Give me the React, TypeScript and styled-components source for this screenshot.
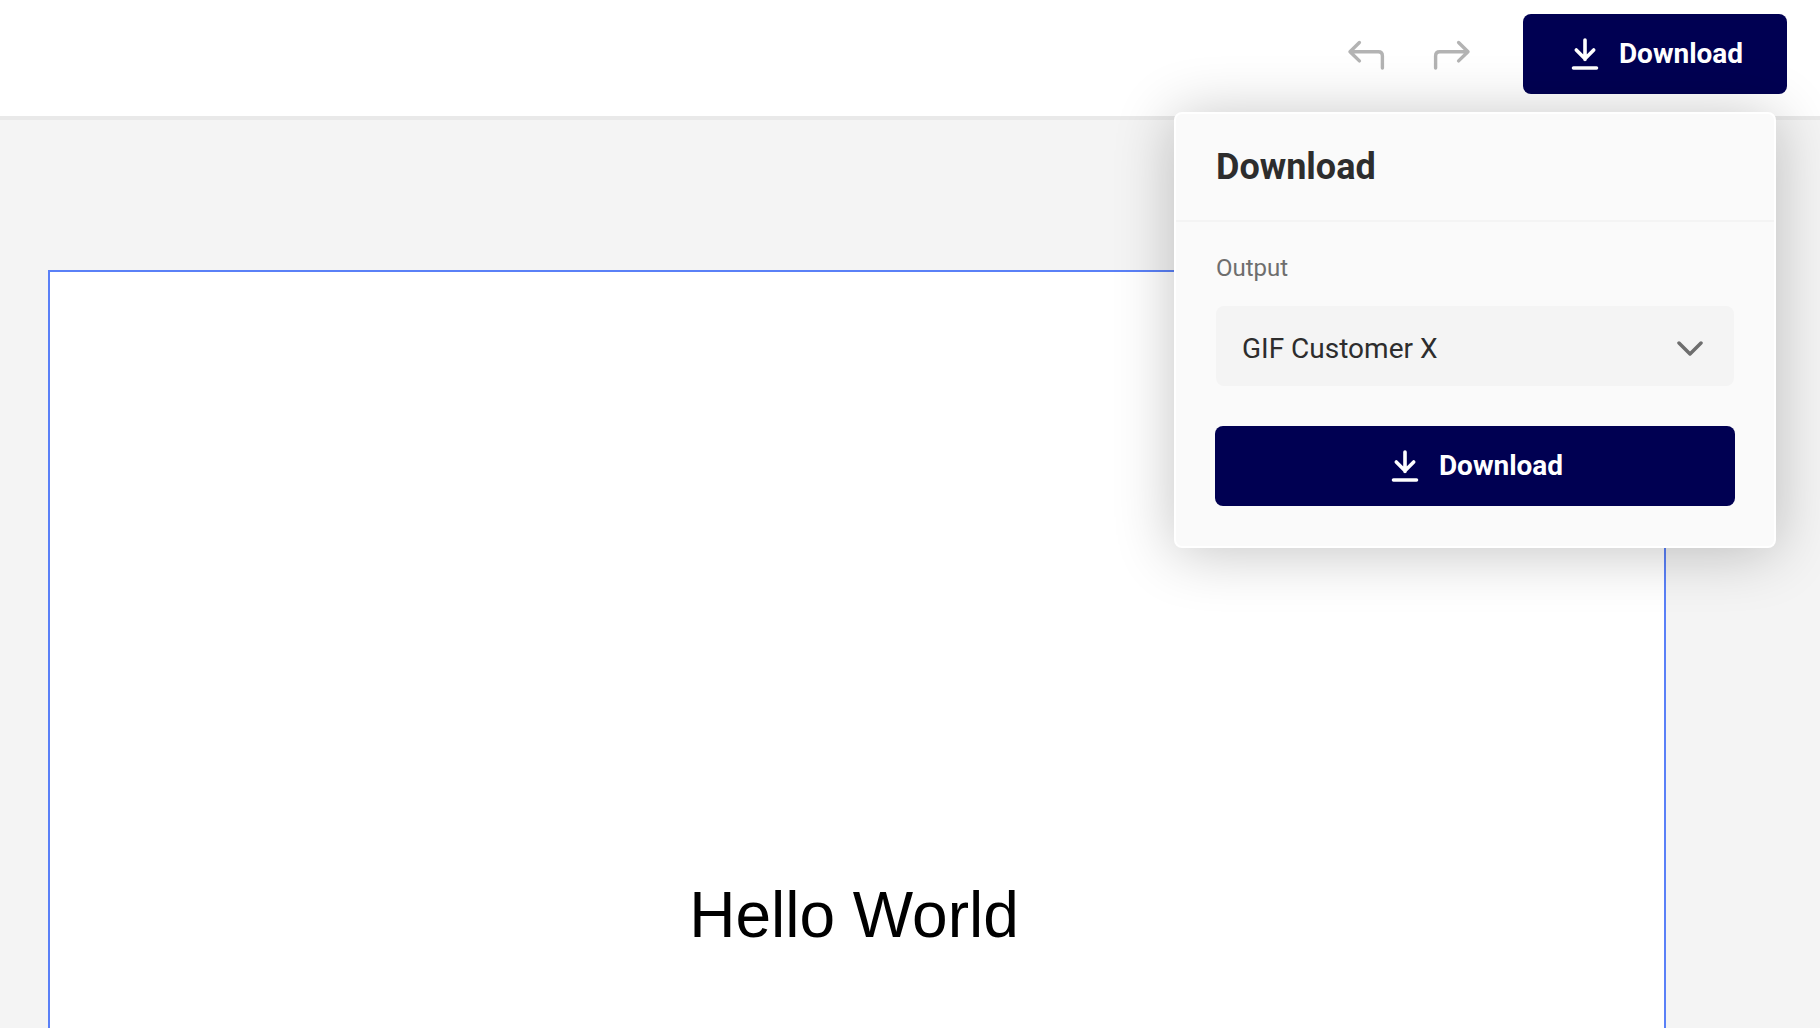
import React, { useState } from "react";
import styled, { createGlobalStyle } from "styled-components";

const GlobalStyle = createGlobalStyle`
  *, *::before, *::after { box-sizing: border-box; }
  body {
    margin: 0;
    background: #f4f4f4;
    font-family: Roboto, "Liberation Sans", sans-serif;
    color: #2d2d2d;
  }
`;

const Page = styled.div`
  display: flex;
  flex-direction: column;
  min-height: 100vh;
`;

const Toolbar = styled.header`
  position: relative;
  display: flex;
  align-items: center;
  justify-content: flex-end;
  padding: 14px 33px 22px;
  background: #ffffff;
  border-bottom: 4px solid #e9e9e9;
`;

const History = styled.div`
  display: flex;
  gap: 22px;
  margin-right: 39px;
`;

const IconButton = styled.button`
  display: flex;
  align-items: center;
  justify-content: center;
  width: 64px;
  height: 64px;
  padding: 0;
  border: 0;
  background: transparent;
  color: #b3b3b3;
`;

const PrimaryButton = styled.button<{ $block?: boolean }>`
  display: flex;
  align-items: center;
  justify-content: center;
  gap: 16px;
  width: ${({ $block }) => ($block ? "100%" : "264px")};
  height: 80px;
  padding: 0 40px;
  border: 0;
  border-radius: 8px;
  background: #000052;
  color: #ffffff;
  font: 700 28px/40px Roboto, "Liberation Sans", sans-serif;
  cursor: pointer;
`;

const Popover = styled.section`
  position: absolute;
  top: 112px;
  right: 44px;
  z-index: 1;
  width: 602px;
  border: 2px solid #ffffff;
  border-radius: 8px;
  background: #fafafa;
  box-shadow: 0 4px 60px rgba(0, 0, 0, 0.24);
`;

const PopoverHeader = styled.div`
  padding: 33px 40px;
  border-bottom: 2px solid #f4f4f4;
`;

const Title = styled.h2`
  margin: 0;
  font-size: 36px;
  font-weight: 700;
  line-height: 40px;
`;

const PopoverBody = styled.form`
  display: flex;
  flex-direction: column;
  padding: 26px 39px 40px;
`;

const Label = styled.label`
  margin: 0 1px 18px;
  color: #6e6e6e;
  font-size: 24px;
  line-height: 40px;
`;

const SelectField = styled.div`
  display: grid;
  align-items: center;
  margin: 0 1px 40px;

  > * { grid-area: 1 / 1; }
  > svg {
    justify-self: end;
    margin-right: 29px;
    pointer-events: none;
    color: #6e6e6e;
  }
`;

const Select = styled.select`
  width: 100%;
  height: 80px;
  padding: 6px 72px 0 26px;
  border: 0;
  border-radius: 8px;
  appearance: none;
  background: #f4f4f4;
  color: #2d2d2d;
  font: 400 28px/40px Roboto, "Liberation Sans", sans-serif;
`;

const Workspace = styled.main`
  display: flex;
  flex: 1;
  padding: 150px 154px 0 48px;
`;

const Canvas = styled.div`
  flex: 1;
  padding: 607px 6px 0 0;
  border: 2px solid #5a80f7;
  border-bottom: 0;
  background: #ffffff;
`;

const CanvasText = styled.p`
  margin: 0;
  color: #000000;
  font: 400 64px/72px "Liberation Sans", Arial, sans-serif;
  text-align: center;
`;

const UndoIcon = () => (
  <svg width="40" height="32" viewBox="0 0 40 32" fill="none" stroke="currentColor" strokeWidth="3.4" strokeLinecap="round" strokeLinejoin="round" aria-hidden="true">
    <path d="M13.4 4.500 4 13.700l9.400 9.200M4 13.700h28.400q4 0 4 4v12.300" />
  </svg>
);

const RedoIcon = () => (
  <svg width="40" height="32" viewBox="0 0 40 32" fill="none" stroke="currentColor" strokeWidth="3.4" strokeLinecap="round" strokeLinejoin="round" aria-hidden="true">
    <path d="M26.600 4.500 36 13.700l-9.400 9.200M36 13.700H7.600q-4 0-4 4v12.300" />
  </svg>
);

const DownloadIcon = () => (
  <svg width="36" height="36" viewBox="0 0 36 36" fill="none" stroke="currentColor" strokeWidth="3.6" strokeLinecap="round" strokeLinejoin="round" aria-hidden="true">
    <path d="M18 4v19.500M9.300 14l8.700 8.700 8.700-8.700M6.500 32h23" />
  </svg>
);

const ChevronIcon = () => (
  <svg width="30" height="20" viewBox="0 0 30 20" fill="none" stroke="currentColor" strokeWidth="3.5" strokeLinecap="round" strokeLinejoin="round" aria-hidden="true">
    <path d="m4 7 11 11L26 7" />
  </svg>
);

export default function App() {
  const [open, setOpen] = useState(true);

  return (
    <Page>
      <GlobalStyle />
      <Toolbar>
        <History>
          <IconButton type="button" aria-label="Undo"><UndoIcon /></IconButton>
          <IconButton type="button" aria-label="Redo"><RedoIcon /></IconButton>
        </History>
        <PrimaryButton type="button" aria-expanded={open} onClick={() => setOpen(!open)}>
          <DownloadIcon />
          Download
        </PrimaryButton>
        {open && (
          <Popover>
            <PopoverHeader>
              <Title>Download</Title>
            </PopoverHeader>
            <PopoverBody onSubmit={(event) => event.preventDefault()}>
              <Label htmlFor="output">Output</Label>
              <SelectField>
                <Select id="output">
                  <option>GIF Customer X</option>
                </Select>
                <ChevronIcon />
              </SelectField>
              <PrimaryButton type="submit" $block>
                <DownloadIcon />
                Download
              </PrimaryButton>
            </PopoverBody>
          </Popover>
        )}
      </Toolbar>
      <Workspace>
        <Canvas>
          <CanvasText>Hello World</CanvasText>
        </Canvas>
      </Workspace>
    </Page>
  );
}
